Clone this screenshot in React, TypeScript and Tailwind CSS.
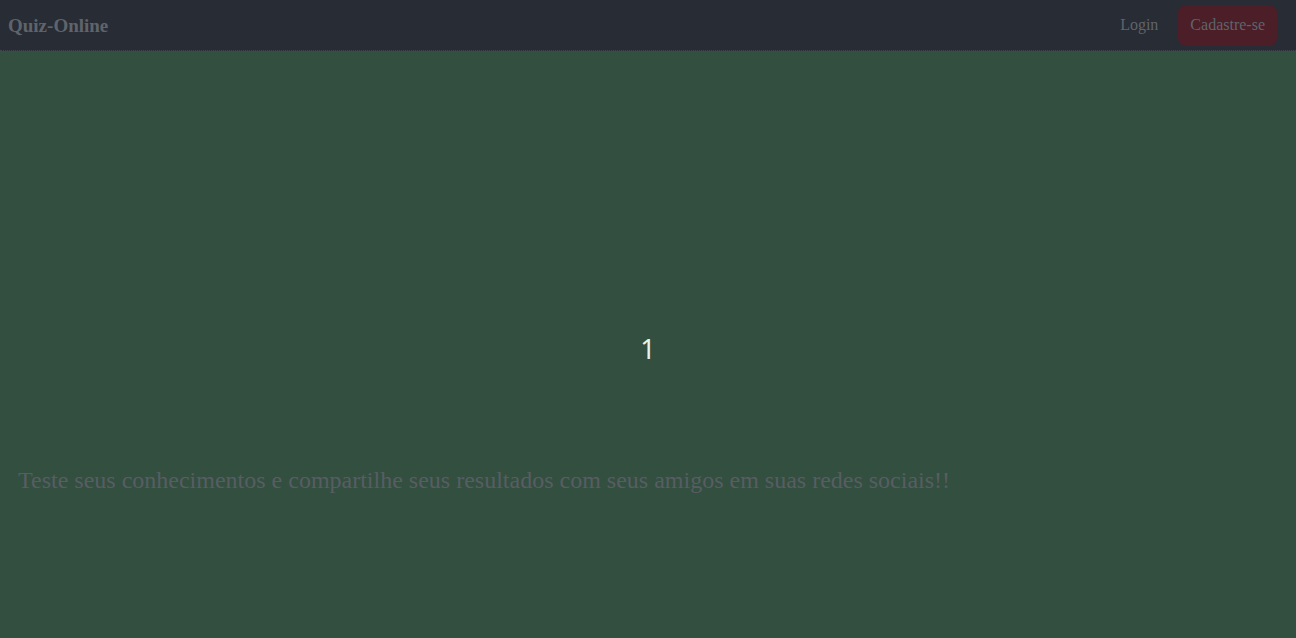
import React from 'react';

const App = () => {
  return (
    <div className="min-h-screen flex flex-col bg-[#334f40]" style={{ fontFamily: '"Liberation Serif", serif' }}>
      {/* Navbar */}
      <nav className="h-[51px] bg-[#282c34] border-b border-dotted border-[#3a4a44] flex items-center justify-between pl-2 pr-[19px]">
        <a href="#" className="text-[19px] font-bold text-[#5f646b] mt-[3px]">Quiz-Online</a>
        <div className="flex items-center">
          <a href="#" className="text-base text-[#5f646b] mr-[20px]">Login</a>
          <button className="h-[41px] px-[12px] rounded-lg bg-[#4b1e28] text-base text-[#5f646b]">
            Cadastre-se
          </button>
        </div>
      </nav>

      {/* Conteúdo */}
      <main className="flex-1 flex flex-col">
        <div className="pt-[280px] flex justify-center">
          <span className="text-[27px] leading-9 text-[#e4f3ee]" style={{ fontFamily: '"Noto Sans", sans-serif' }}>1</span>
        </div>
        <p className="mt-[97px] px-[18px] text-2xl text-[#585d63]">
          Teste seus conhecimentos e compartilhe seus resultados com seus amigos em suas redes sociais!!
        </p>
      </main>
    </div>
  );
};

export default App;
